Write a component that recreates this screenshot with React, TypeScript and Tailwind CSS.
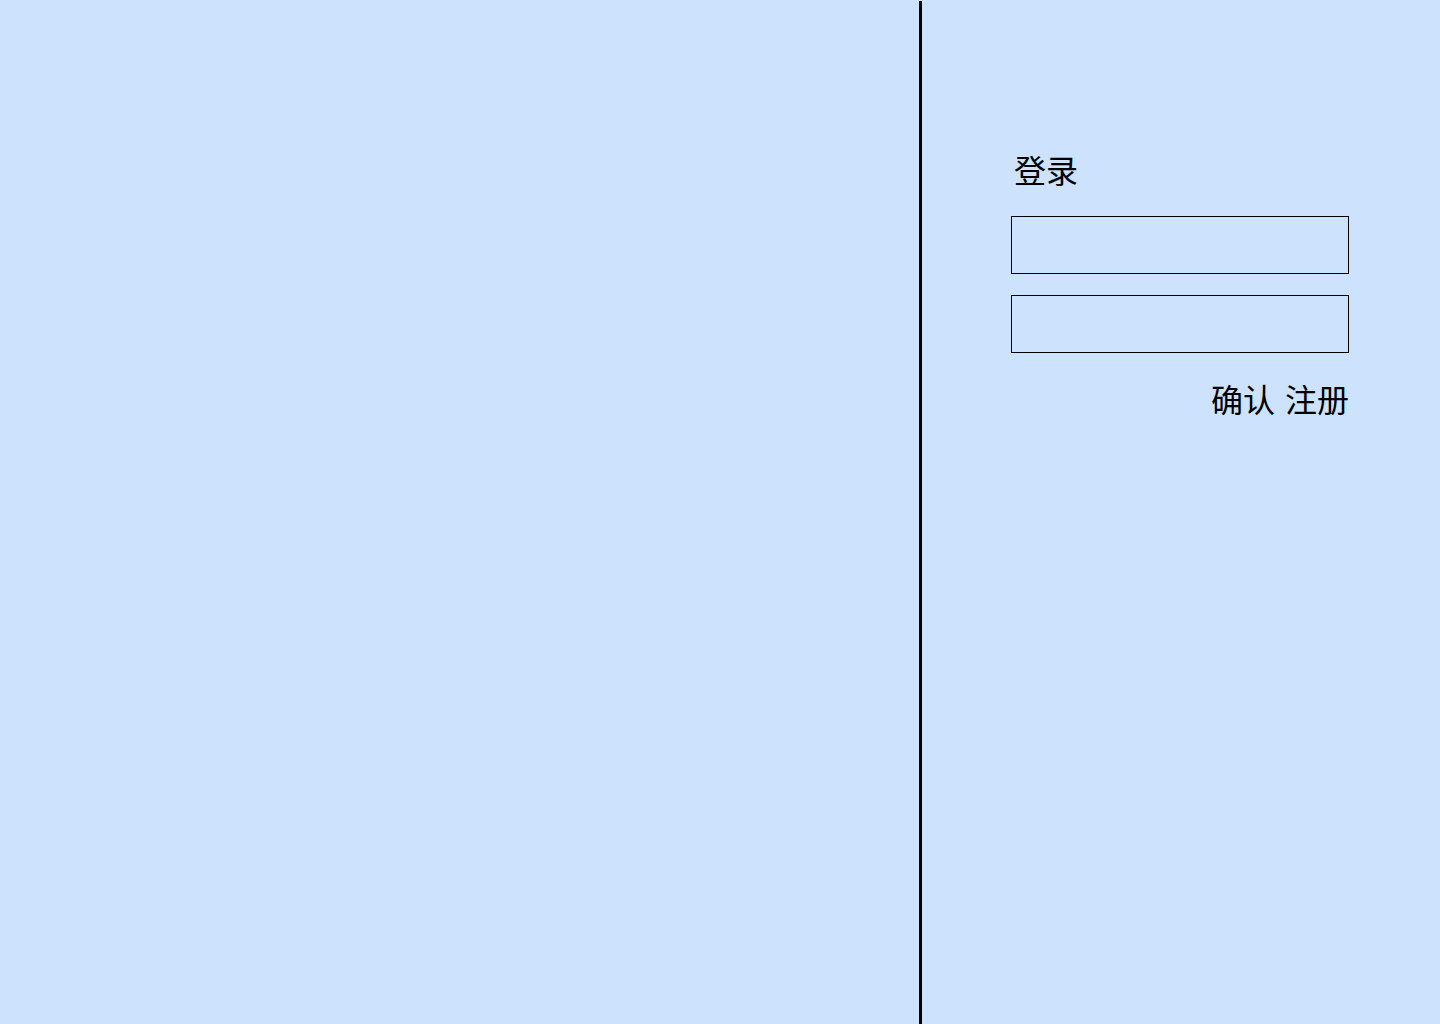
export default function App() {
  return (
    <div
      className="flex h-[1024px] w-full bg-[#cce2fd] pt-px text-black"
      style={{ fontFamily: '"Noto Sans CJK SC", "Noto Sans", sans-serif' }}
    >
      <div className="w-[922px] shrink-0 border-r-[3px] border-black" />
      <div className="flex flex-1 flex-col pl-[89px] pt-[144px]">
        <div className="flex w-[338px] flex-col">
          <h1 className="pl-[3px] text-[32px] leading-[48px]">登录</h1>
          <input className="mt-[23px] h-[58px] w-full border border-black bg-transparent outline-none" />
          <input className="mt-[21px] h-[58px] w-full border border-black bg-transparent outline-none" />
          <div className="mt-[21px] flex justify-end gap-[10px] text-[32px] leading-[48px]">
            <button>确认</button>
            <button>注册</button>
          </div>
        </div>
      </div>
    </div>
  );
}
